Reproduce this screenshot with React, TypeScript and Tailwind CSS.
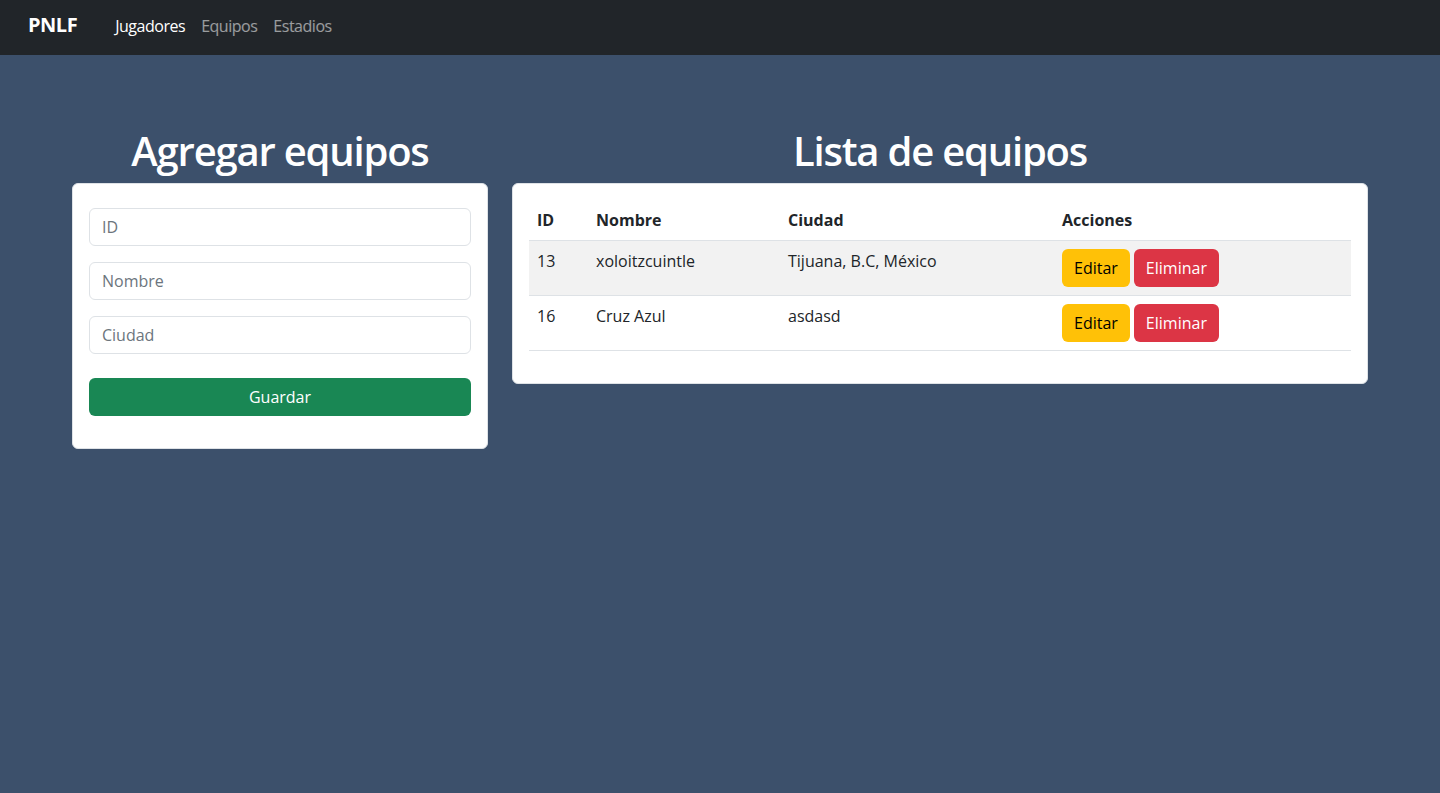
const equipos = [
  { id: 13, nombre: "xoloitzcuintle", ciudad: "Tijuana, B.C, México" },
  { id: 16, nombre: "Cruz Azul", ciudad: "asdasd" },
];

function Navbar() {
  return (
    <nav className="h-[55px] bg-[#212529] flex items-center pl-[28px] tracking-[-0.03em]">
      <span className="text-[20px] font-bold text-white mr-[30px] -mt-[5px]">PNLF</span>
      <div className="flex items-center -mt-[3px]">
        <a className="px-2 text-white">Jugadores</a>
        <a className="px-2 text-white/55">Equipos</a>
        <a className="px-2 text-white/55">Estadios</a>
      </div>
    </nav>
  );
}

function Campo({ placeholder }: { placeholder: string }) {
  return (
    <input
      placeholder={placeholder}
      className="block w-full h-[38px] mb-4 px-3 rounded-md border border-[#dee2e6] bg-white text-[#212529] placeholder:text-[#6c757d] outline-none"
    />
  );
}

function FormEquipo() {
  return (
    <div className="w-[416px]">
      <h1 className="text-[40px] leading-[48px] font-semibold tracking-[-0.03em] text-white text-center mb-2">
        Agregar equipos
      </h1>
      <div className="bg-white border border-[#dee2e6] rounded-md px-4 pt-6 pb-8">
        <Campo placeholder="ID" />
        <Campo placeholder="Nombre" />
        <Campo placeholder="Ciudad" />
        <button className="mt-2 w-full h-[38px] rounded-md bg-[#198754] text-white">
          Guardar
        </button>
      </div>
    </div>
  );
}

function ListaEquipos() {
  return (
    <div className="w-[856px]">
      <h1 className="text-[40px] leading-[48px] font-semibold tracking-[-0.03em] text-white text-center mb-2">
        Lista de equipos
      </h1>
      <div className="bg-white border border-[#dee2e6] rounded-md p-4">
        <table className="w-full mb-4 text-[#212529] border-collapse">
          <thead>
            <tr className="border-b border-[#dee2e6] text-left">
              <th className="w-[59px] p-2 font-bold">ID</th>
              <th className="w-[192px] p-2 font-bold">Nombre</th>
              <th className="w-[274px] p-2 font-bold">Ciudad</th>
              <th className="p-2 font-bold">Acciones</th>
            </tr>
          </thead>
          <tbody>
            {equipos.map((e, i) => (
              <tr
                key={e.id}
                className={i % 2 === 0 ? "border-b border-[#dee2e6] bg-[#f2f2f2]" : "border-b border-[#dee2e6]"}
              >
                <td className="p-2 align-top">{e.id}</td>
                <td className="p-2 align-top">{e.nombre}</td>
                <td className="p-2 align-top">{e.ciudad}</td>
                <td className="p-2 align-top">
                  <div className="flex gap-1">
                    <button className="h-[38px] px-3 rounded-md bg-[#ffc107] text-black">Editar</button>
                    <button className="h-[38px] px-3 rounded-md bg-[#dc3545] text-white">Eliminar</button>
                  </div>
                </td>
              </tr>
            ))}
          </tbody>
        </table>
      </div>
    </div>
  );
}

export default function App() {
  return (
    <div className="min-h-[793px] bg-[#3c506b] font-['Open_Sans',sans-serif] text-base">
      <Navbar />
      <div className="w-[1296px] mx-auto pt-[72px] flex gap-6 items-start">
        <FormEquipo />
        <ListaEquipos />
      </div>
    </div>
  );
}
